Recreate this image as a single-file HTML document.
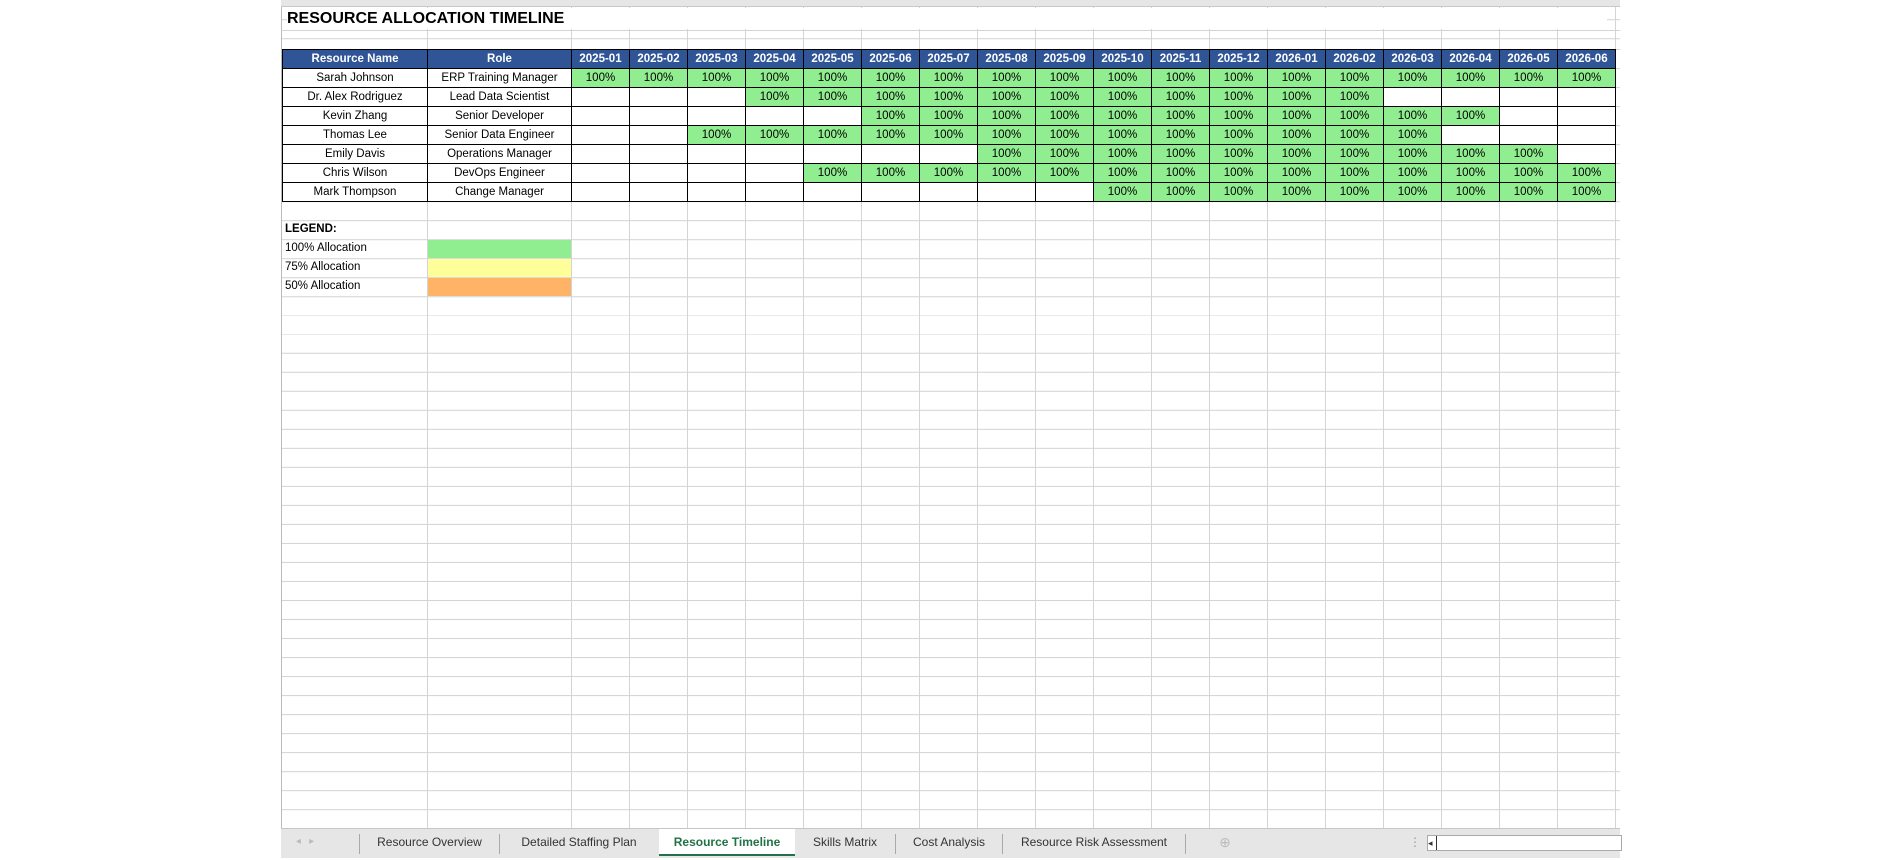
<!DOCTYPE html>
<html><head><meta charset="utf-8"><style>
body{margin:0;width:1900px;height:860px;background:#fff;position:relative;overflow:hidden;font-family:"Liberation Sans",Arial,sans-serif;}
.sheet{position:absolute;left:281px;top:0;width:1339px;height:828px;background:#fff;
background-image:repeating-linear-gradient(to bottom,#d4d4d4 0,#d4d4d4 1px,transparent 1px,transparent 19px);
background-position:0 49px;background-repeat:repeat-y;}
.months{position:absolute;left:571px;top:0;width:1049px;height:828px;
background-image:repeating-linear-gradient(to right,#d4d4d4 0,#d4d4d4 1px,transparent 1px,transparent 58px);}
.top{position:absolute;left:281px;top:0;width:1339px;height:6px;background:#e6e6e6;border-bottom:1px solid #c8c8c8}
.vl{position:absolute;top:0;height:828px;width:1px;background:#d4d4d4}
.hl{position:absolute;left:281px;width:1339px;height:1px;background:#d4d4d4}
.title{position:absolute;left:287px;top:8px;font-weight:bold;font-size:16px;color:#000;background:#fff;width:1320px;height:21px;line-height:21px}
table{position:absolute;left:282px;top:49px;border-collapse:collapse;table-layout:fixed;font-size:11.5px}
td,th{border:1px solid #000;height:18px;padding:0;text-align:center;white-space:nowrap;overflow:hidden;line-height:17px;background:#fff}
th{background:#2F5597;color:#fff;font-weight:bold;font-size:11.5px}
td.g{background:#90EE90}
.leg{position:absolute;left:285px;font-size:11.5px;line-height:19px}
.sw{position:absolute;left:428px;width:143px;height:18px}
.tabs{position:absolute;left:281px;top:828px;width:1339px;height:29px;background:#e6e6e6;border-top:1px solid #c6c6c6;font-size:12px;color:#333}
.tab{position:absolute;top:0;height:26px;line-height:26px;text-align:center}
.sep{position:absolute;top:5px;width:1px;height:20px;background:#aaa}
</style></head><body>
<div class="sheet"></div>
<div class="months"></div>
<div class="vl" style="left:281px;background:#bbb"></div>
<div class="vl" style="left:427px"></div>
<div class="hl" style="top:30px"></div>
<div class="top"></div>
<div class="title">RESOURCE ALLOCATION TIMELINE</div>
<table>
<colgroup><col style="width:145px"><col style="width:144px"><col span="18" style="width:58px"></colgroup>
<tr><th>Resource Name</th><th>Role</th><th>2025-01</th><th>2025-02</th><th>2025-03</th><th>2025-04</th><th>2025-05</th><th>2025-06</th><th>2025-07</th><th>2025-08</th><th>2025-09</th><th>2025-10</th><th>2025-11</th><th>2025-12</th><th>2026-01</th><th>2026-02</th><th>2026-03</th><th>2026-04</th><th>2026-05</th><th>2026-06</th></tr>
<tr><td>Sarah Johnson</td><td>ERP Training Manager</td><td class="g">100%</td><td class="g">100%</td><td class="g">100%</td><td class="g">100%</td><td class="g">100%</td><td class="g">100%</td><td class="g">100%</td><td class="g">100%</td><td class="g">100%</td><td class="g">100%</td><td class="g">100%</td><td class="g">100%</td><td class="g">100%</td><td class="g">100%</td><td class="g">100%</td><td class="g">100%</td><td class="g">100%</td><td class="g">100%</td></tr>
<tr><td>Dr. Alex Rodriguez</td><td>Lead Data Scientist</td><td></td><td></td><td></td><td class="g">100%</td><td class="g">100%</td><td class="g">100%</td><td class="g">100%</td><td class="g">100%</td><td class="g">100%</td><td class="g">100%</td><td class="g">100%</td><td class="g">100%</td><td class="g">100%</td><td class="g">100%</td><td></td><td></td><td></td><td></td></tr>
<tr><td>Kevin Zhang</td><td>Senior Developer</td><td></td><td></td><td></td><td></td><td></td><td class="g">100%</td><td class="g">100%</td><td class="g">100%</td><td class="g">100%</td><td class="g">100%</td><td class="g">100%</td><td class="g">100%</td><td class="g">100%</td><td class="g">100%</td><td class="g">100%</td><td class="g">100%</td><td></td><td></td></tr>
<tr><td>Thomas Lee</td><td>Senior Data Engineer</td><td></td><td></td><td class="g">100%</td><td class="g">100%</td><td class="g">100%</td><td class="g">100%</td><td class="g">100%</td><td class="g">100%</td><td class="g">100%</td><td class="g">100%</td><td class="g">100%</td><td class="g">100%</td><td class="g">100%</td><td class="g">100%</td><td class="g">100%</td><td></td><td></td><td></td></tr>
<tr><td>Emily Davis</td><td>Operations Manager</td><td></td><td></td><td></td><td></td><td></td><td></td><td></td><td class="g">100%</td><td class="g">100%</td><td class="g">100%</td><td class="g">100%</td><td class="g">100%</td><td class="g">100%</td><td class="g">100%</td><td class="g">100%</td><td class="g">100%</td><td class="g">100%</td><td></td></tr>
<tr><td>Chris Wilson</td><td>DevOps Engineer</td><td></td><td></td><td></td><td></td><td class="g">100%</td><td class="g">100%</td><td class="g">100%</td><td class="g">100%</td><td class="g">100%</td><td class="g">100%</td><td class="g">100%</td><td class="g">100%</td><td class="g">100%</td><td class="g">100%</td><td class="g">100%</td><td class="g">100%</td><td class="g">100%</td><td class="g">100%</td></tr>
<tr><td>Mark Thompson</td><td>Change Manager</td><td></td><td></td><td></td><td></td><td></td><td></td><td></td><td></td><td></td><td class="g">100%</td><td class="g">100%</td><td class="g">100%</td><td class="g">100%</td><td class="g">100%</td><td class="g">100%</td><td class="g">100%</td><td class="g">100%</td><td class="g">100%</td></tr>
</table>
<div class="leg" style="top:220px;font-weight:bold">LEGEND:</div>
<div class="leg" style="top:239px">100% Allocation</div>
<div class="leg" style="top:258px">75% Allocation</div>
<div class="leg" style="top:277px">50% Allocation</div>
<div class="sw" style="top:240px;background:#90EE90"></div>
<div class="sw" style="top:259px;background:#FFFF99"></div>
<div class="sw" style="top:278px;background:#FFB366"></div>
<div class="tabs">
<div class="tab" style="left:4px;width:40px;color:#bbb;font-size:10px">◂ &nbsp; ▸</div>
<div class="sep" style="left:78px"></div>
<div class="tab" style="left:79px;width:139px">Resource Overview</div>
<div class="sep" style="left:218px"></div>
<div class="tab" style="left:219px;width:158px">Detailed Staffing Plan</div>
<div class="tab" style="left:378px;width:136px;background:#fff;color:#217346;font-weight:bold;border-bottom:2px solid #217346;height:25px">Resource Timeline</div>
<div class="tab" style="left:514px;width:100px">Skills Matrix</div>
<div class="sep" style="left:614px"></div>
<div class="tab" style="left:615px;width:106px">Cost Analysis</div>
<div class="sep" style="left:721px"></div>
<div class="tab" style="left:722px;width:182px">Resource Risk Assessment</div>
<div class="sep" style="left:904px"></div>
<div class="tab" style="left:934px;width:20px;color:#bbb;font-size:14px">⊕</div>
<div class="tab" style="left:1128px;width:8px;color:#999">⋮</div>
<div style="position:absolute;left:1146px;top:6px;width:193px;height:14px;background:#fff;border:1px solid #aaa"><div style="width:8px;height:14px;border-right:1px solid #333;font-size:9px;line-height:14px">◂</div></div>
</div>
</body></html>
